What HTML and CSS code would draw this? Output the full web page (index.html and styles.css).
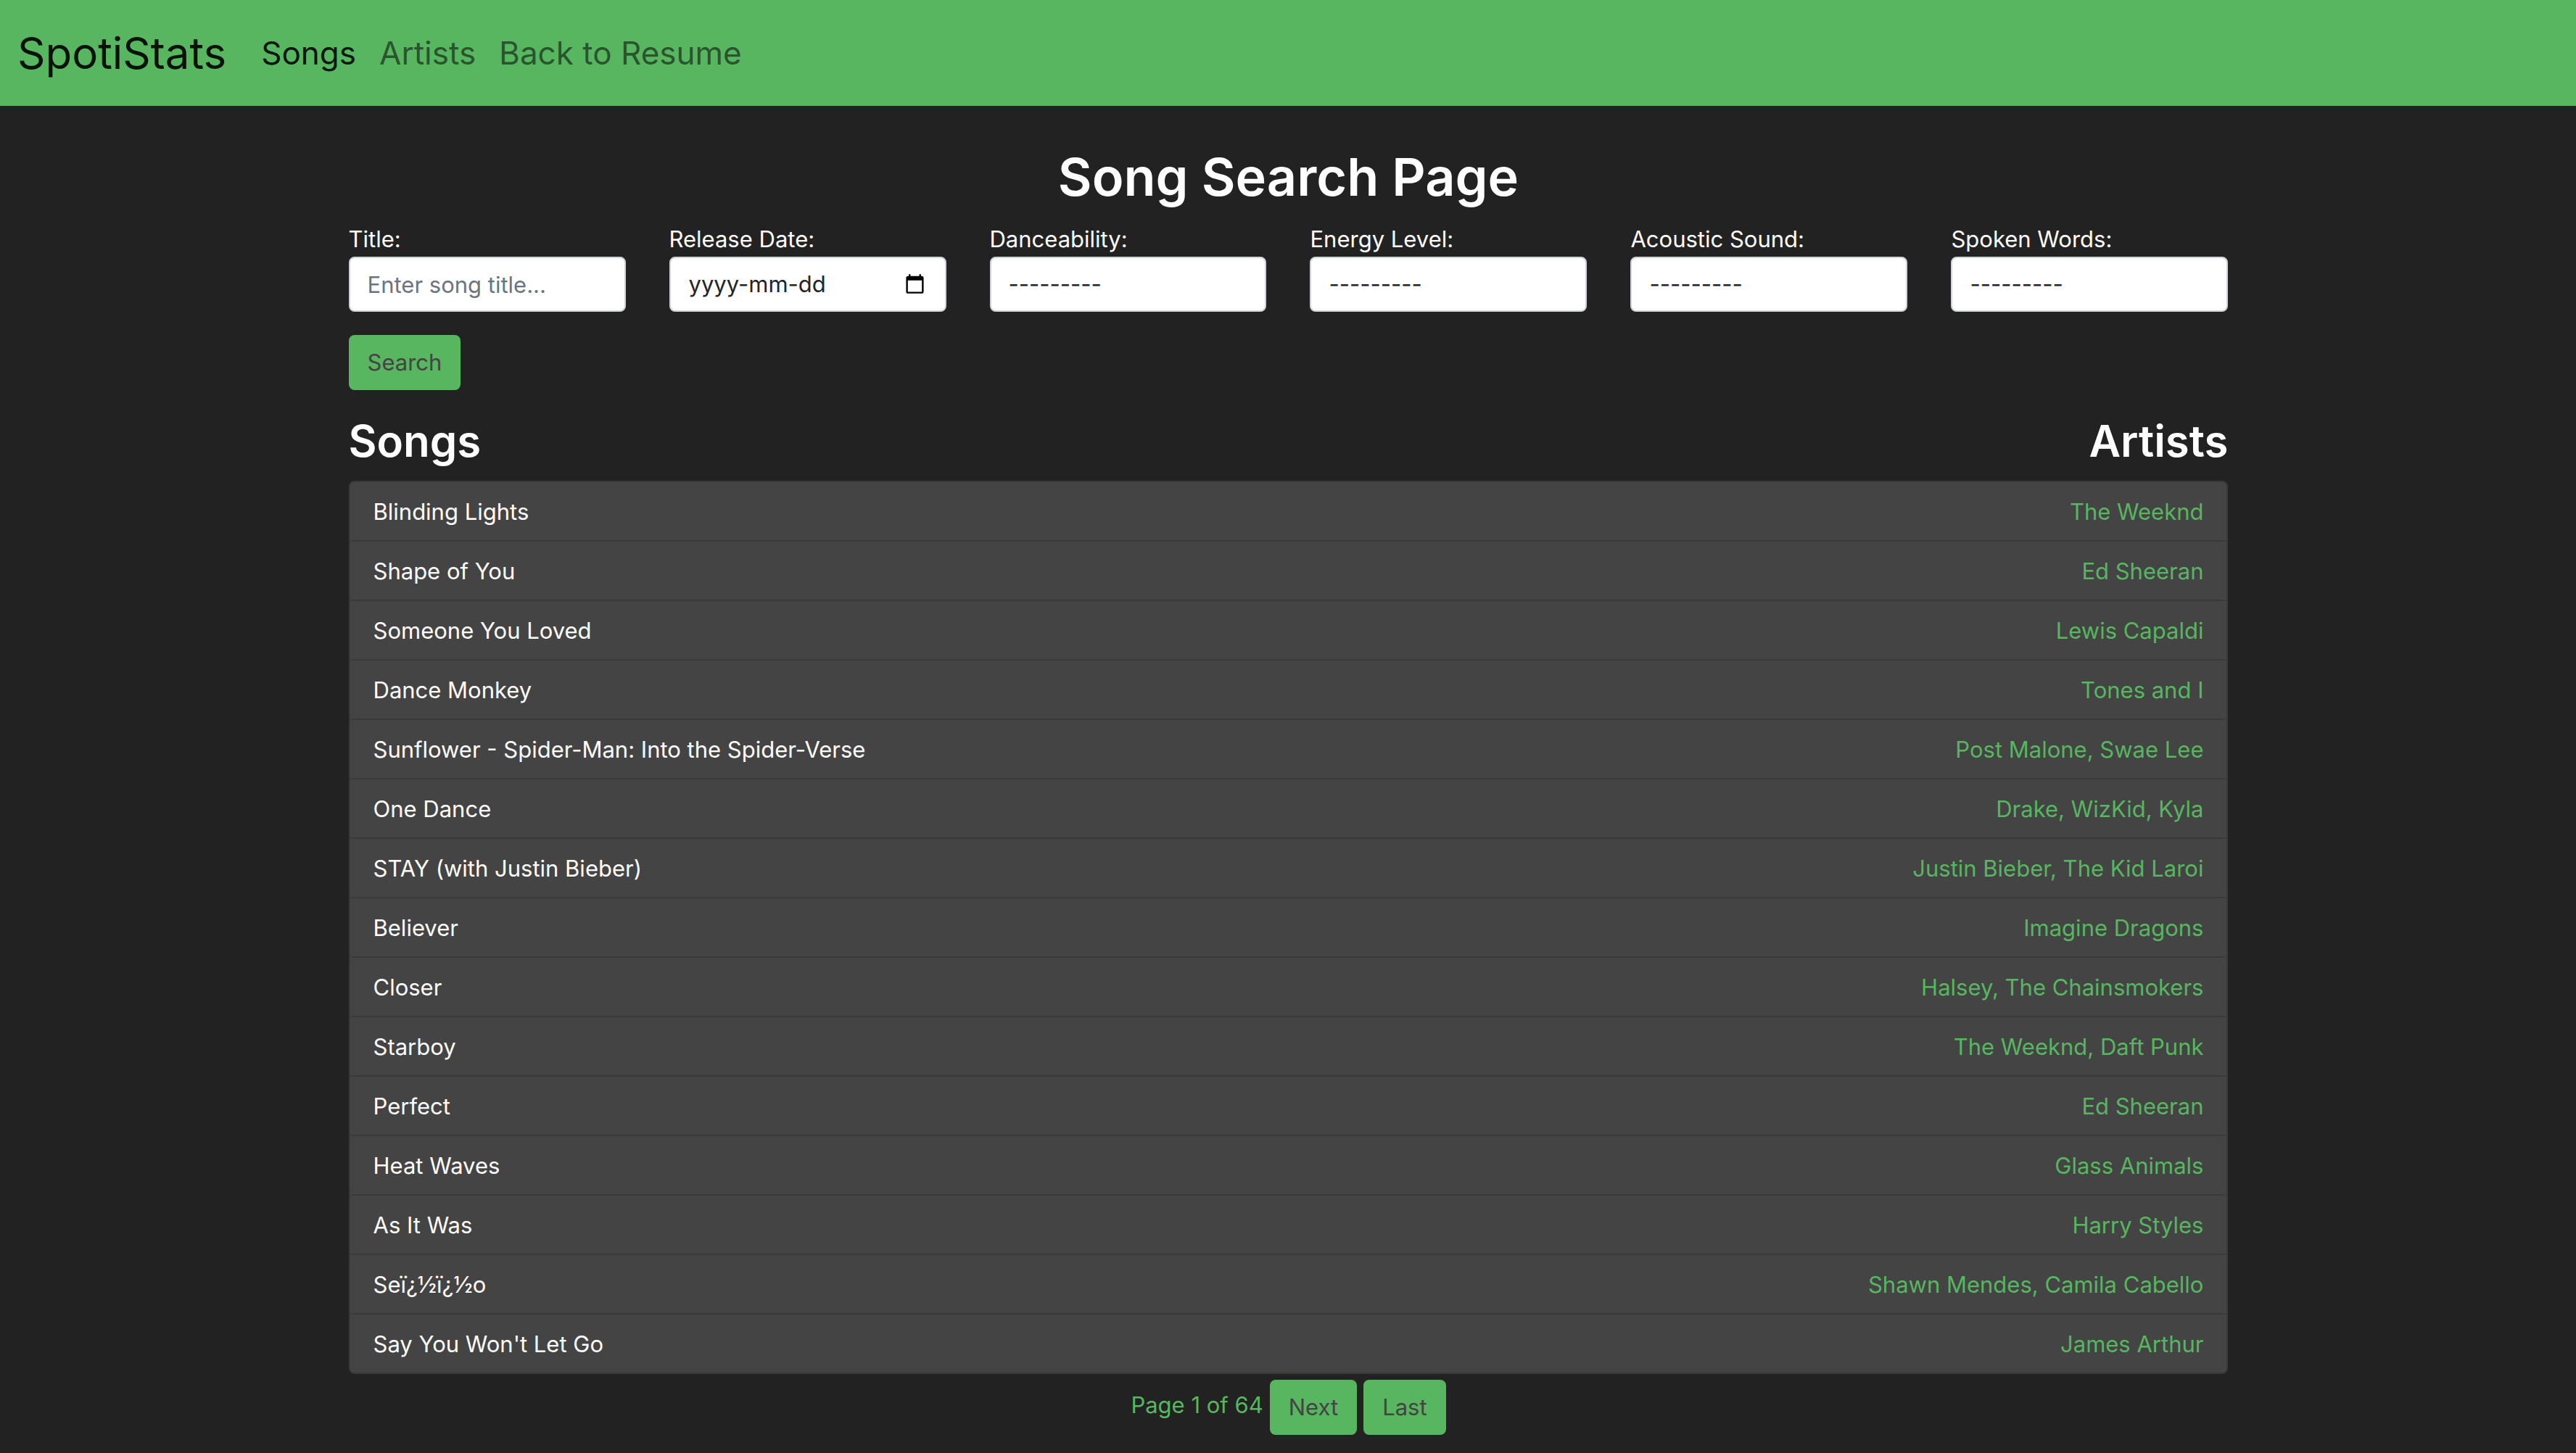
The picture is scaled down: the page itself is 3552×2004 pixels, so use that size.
FILE: index.html
```html
<!DOCTYPE html>
<html lang="en-CA">
<head>
<meta charset="utf-8">
<title>SpotiStats - Songs</title>
<link rel="stylesheet" href="styles.css">
</head>
<body>
<nav class="navbar">
  <a class="brand" href="#">SpotiStats</a>
  <a class="nav-link active" href="#">Songs</a>
  <a class="nav-link" href="#">Artists</a>
  <a class="nav-link" href="#">Back to Resume</a>
</nav>
<main class="container">
  <h1 class="page-title">Song Search Page</h1>
  <form class="search">
    <div class="fields">
      <div class="field"><label for="title">Title:</label><input class="control" id="title" type="text" placeholder="Enter song title..."></div>
      <div class="field"><label for="date">Release Date:</label><div class="date-box"><input class="control date" id="date" type="date"><span class="date-hint" aria-hidden="true">yyyy-mm-dd</span></div></div>
      <div class="field"><label for="dance">Danceability:</label><select class="control" id="dance"><option>---------</option></select></div>
      <div class="field"><label for="energy">Energy Level:</label><select class="control" id="energy"><option>---------</option></select></div>
      <div class="field"><label for="acoustic">Acoustic Sound:</label><select class="control" id="acoustic"><option>---------</option></select></div>
      <div class="field"><label for="spoken">Spoken Words:</label><select class="control" id="spoken"><option>---------</option></select></div>
    </div>
    <button class="btn" type="submit">Search</button>
  </form>
  <div class="list-head"><h2>Songs</h2><h2>Artists</h2></div>
  <ul class="list">
    <li><span>Blinding Lights</span><a href="#">The Weeknd</a></li>
    <li><span>Shape of You</span><a href="#">Ed Sheeran</a></li>
    <li><span>Someone You Loved</span><a href="#">Lewis Capaldi</a></li>
    <li><span>Dance Monkey</span><a href="#">Tones and I</a></li>
    <li><span>Sunflower - Spider-Man: Into the Spider-Verse</span><a href="#">Post Malone, Swae Lee</a></li>
    <li><span>One Dance</span><a href="#">Drake, WizKid, Kyla</a></li>
    <li><span>STAY (with Justin Bieber)</span><a href="#">Justin Bieber, The Kid Laroi</a></li>
    <li><span>Believer</span><a href="#">Imagine Dragons</a></li>
    <li><span>Closer</span><a href="#">Halsey, The Chainsmokers</a></li>
    <li><span>Starboy</span><a href="#">The Weeknd, Daft Punk</a></li>
    <li><span>Perfect</span><a href="#">Ed Sheeran</a></li>
    <li><span>Heat Waves</span><a href="#">Glass Animals</a></li>
    <li><span>As It Was</span><a href="#">Harry Styles</a></li>
    <li><span>Seï¿½ï¿½o</span><a href="#">Shawn Mendes, Camila Cabello</a></li>
    <li><span>Say You Won't Let Go</span><a href="#">James Arthur</a></li>
  </ul>
  <div class="pager">
    <span>Page 1 of 64</span>
    <button class="btn" type="button">Next</button>
    <button class="btn" type="button">Last</button>
  </div>
</main>
</body>
</html>
```
FILE: styles.css
```css
* { box-sizing: border-box; }
body {
  margin: 0;
  background: #222;
  color: #fff;
  font: 400 31px/48px Inter, "Liberation Sans", sans-serif;
}
a { color: #58b560; text-decoration: none; }
.navbar {
  display: flex;
  align-items: center;
  gap: 32px;
  padding: 25px 24px;
  background: #58b560;
}
.navbar .brand {
  margin-right: 16px;
  color: rgba(0, 0, 0, .9);
  font-size: 60px;
  line-height: 96px;
}
.navbar .nav-link { color: rgba(0, 0, 0, .55); font-size: 44px; line-height: 72px; }
.navbar .nav-link.active { color: rgba(0, 0, 0, .9); }
.container { width: 73%; margin: 0 auto; padding: 0 0 24px 1px; }
h1, h2 { margin: 0; font-weight: 600; }
.page-title {
  padding: 50px 0 14px;
  font-size: 72px;
  line-height: 96px;
  text-align: center;
}
.fields {
  display: grid;
  grid-template-columns: repeat(6, 1fr);
  gap: 60px;
  margin-bottom: 32px;
}
.field { display: flex; flex-direction: column; }
.control {
  appearance: none;
  width: 100%;
  height: 76px;
  margin: 0;
  padding: 12px 24px;
  border: 2px solid #ced4da;
  border-radius: 8px;
  background: #fff;
  color: #212529;
  font: inherit;
}
.control::placeholder { color: #6c757d; opacity: 1; }

/* The hint shares the input's grid cell and covers its empty date parts. */
.date-box { display: grid; align-items: center; }
.date-box > * { grid-area: 1 / 1; }
.date::-webkit-datetime-edit { opacity: 0; }
.date-hint { justify-self: start; padding-left: 27px; color: #212529; pointer-events: none; }
.date:focus::-webkit-datetime-edit { opacity: 1; }
.date:focus + .date-hint { visibility: hidden; }

.btn {
  height: 76px;
  padding: 12px 26px;
  border: 0;
  border-radius: 8px;
  background: #58b560;
  color: #444;
  font: inherit;
}
.search .btn { display: block; }
.list-head {
  display: flex;
  justify-content: space-between;
  padding: 32px 0 16px;
}
.list-head h2 { font-size: 60px; line-height: 77px; }
.list {
  margin: 0;
  padding: 0;
  border: 2px solid #3a3a3a;
  border-radius: 8px;
  background: #444;
  list-style: none;
}
.list li {
  display: flex;
  justify-content: space-between;
  padding: 17px 32px 15px;
}
.list li + li { border-top: 2px solid #3a3a3a; }
.pager {
  display: flex;
  justify-content: center;
  gap: 9px;
  padding-top: 8px;
  color: #58b560;
}
.pager span { padding-top: 11px; }
```
